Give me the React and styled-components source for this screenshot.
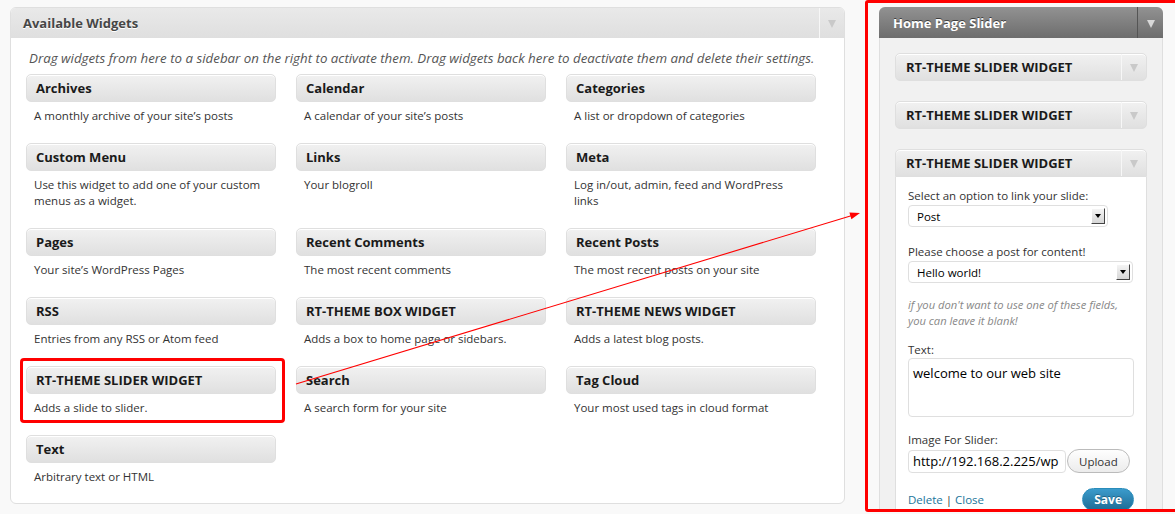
import React from 'react';
import styled, { createGlobalStyle } from 'styled-components';

const Global = createGlobalStyle`
  html, body { margin: 0; padding: 0; background: #f9f9f9; }
  body { font-family: "Open Sans", "DejaVu Sans", sans-serif; color: #333; }
  * { box-sizing: border-box; }
`;

const Page = styled.div`
  position: relative;
  display: flex;
  align-items: flex-start;
  gap: 20px;
  width: 1175px;
  height: 514px;
  padding-left: 10px;
  overflow: hidden;
`;

const Panel = styled.section`
  flex: none;
  margin-top: 7px;
  width: 835px;
  background: #fff;
  border: 1px solid #dfdfdf;
  border-radius: 6px;
`;

const Toggle = styled.div`
  flex: none;
  align-self: stretch;
  width: ${p => p.$w || 25}px;
  display: flex;
  align-items: center;
  justify-content: center;
  border-left: 1px solid ${p => p.$line || '#f7f7f7'};
  &::after {
    content: '';
    border-left: 4.5px solid transparent;
    border-right: 4.5px solid transparent;
    border-top: 8px solid ${p => p.$arrow || '#c9c9c9'};
    margin-top: 2px;
  }
`;

const PanelHeader = styled.div`
  display: flex;
  align-items: center;
  height: 30px;
  background: linear-gradient(#e9e9e9, #dfdfdf);
  border-radius: 5px 5px 0 0;
`;

const PanelTitle = styled.h3`
  flex: 1;
  margin: 0;
  padding-left: 12px;
  font-size: 13px;
  font-weight: 700;
  color: #464646;
  text-shadow: 0 1px 0 #fff;
`;

const Intro = styled.p`
  margin: 0;
  padding: 12px 0 0 18px;
  font-size: 13.3px;
  line-height: 16px;
  font-style: italic;
  color: #555;
  white-space: nowrap;
`;

const Grid = styled.div`
  display: grid;
  grid-template-columns: repeat(3, 250px);
  column-gap: 20px;
  row-gap: 19px;
  padding: 8px 15px 18px;
`;

const Widget = styled.div`
  position: relative;
  ${p => p.$marked && `
    &::after {
      content: '';
      position: absolute;
      top: -8px;
      left: -6px;
      right: -9px;
      bottom: -7px;
      border: 3px solid #f00;
      border-radius: 4px;
      pointer-events: none;
    }
  `}
`;

const Bar = styled.div`
  display: flex;
  align-items: center;
  height: 28px;
  background: linear-gradient(#f1f1f1, #e0e0e0);
  border: 1px solid #dfdfdf;
  border-radius: ${p => (p.$open ? '5px 5px 0 0' : '5px')};
  box-shadow: inset 0 1px 0 #fff;
`;

const BarTitle = styled.h4`
  flex: 1;
  margin: 0;
  padding-left: ${p => p.$pad || 9}px;
  font-size: 13px;
  font-weight: 700;
  color: #1a1a1a;
  white-space: nowrap;
`;

const Desc = styled.div`
  margin-top: 6px;
  padding: 0 8px;
  font-size: 11.5px;
  line-height: 16px;
  color: #333;
`;

const Annotated = styled.div`
  flex: none;
  width: 313px;
  height: 512px;
  border: 3px solid #f00;
  border-radius: 3px;
  overflow: hidden;
  padding: 4px 0 0 11px;
`;

const Sidebar = styled.section`
  width: 284px;
  border: 1px solid #dfdfdf;
  border-radius: 6px 6px 0 0;
  background: #f1f1f1;
`;

const SidebarHeader = styled.div`
  display: flex;
  align-items: center;
  height: 31px;
  margin: -1px -1px 0;
  background: linear-gradient(#929292, #6d6d6d);
  border-radius: 6px 6px 0 0;
`;

const SidebarTitle = styled.h3`
  flex: 1;
  margin: 0;
  padding-left: 14px;
  font-size: 13px;
  font-weight: 700;
  color: #fff;
  text-shadow: 0 -1px 0 #3f3f3f;
`;

const SidebarBody = styled.div`
  display: flex;
  flex-direction: column;
  gap: 20px;
  padding: 15px 15px 0;
`;

const WidgetBody = styled.div`
  background: #fff;
  border: 1px solid #dfdfdf;
  border-top: none;
  padding: 11px 12px 20px;
  display: flex;
  flex-direction: column;
`;

const Label = styled.label`
  display: block;
  font-size: 11.5px;
  line-height: 16px;
  color: #333;
  margin-top: ${p => p.$gap || 0}px;
`;

const Select = styled.div`
  display: flex;
  align-items: center;
  width: ${p => p.$w}px;
  height: 22px;
  margin-top: 1px;
  padding: 0 2px 0 8px;
  border: 1px solid #dfdfdf;
  border-radius: 4px;
  background: #fff;
  font-size: 11.5px;
  color: #000;
`;

const SelectValue = styled.span`
  flex: 1;
`;

const SelectButton = styled.span`
  width: 14px;
  height: 16px;
  display: flex;
  align-items: center;
  justify-content: center;
  background: linear-gradient(#f4f4f4, #d6d6d6);
  border-top: 1px solid #fff;
  border-left: 1px solid #fff;
  border-right: 1px solid #444;
  border-bottom: 1px solid #444;
  &::after {
    content: '';
    border-left: 3.5px solid transparent;
    border-right: 3.5px solid transparent;
    border-top: 4px solid #000;
  }
`;

const Note = styled.p`
  margin: 14px 0 0;
  font-size: 11.2px;
  line-height: 16px;
  font-style: italic;
  color: #888;
`;

const TextArea = styled.div`
  height: 59px;
  padding: 5px 4px;
  border: 1px solid #dfdfdf;
  border-radius: 4px;
  font-size: 13px;
  line-height: 18px;
  color: #000;
`;

const InputRow = styled.div`
  display: flex;
  align-items: center;
  gap: 1px;
  margin-top: 1px;
`;

const Input = styled.div`
  width: 158px;
  height: 23px;
  padding: 0 4px;
  display: flex;
  align-items: center;
  border: 1px solid #dfdfdf;
  border-radius: 4px;
  font-size: 13px;
  color: #000;
  overflow: hidden;
  white-space: nowrap;
`;

const Pill = styled.button`
  height: ${p => (p.$primary ? 23 : 24)}px;
  padding: 0 ${p => (p.$primary ? 11 : 11)}px;
  border-radius: 12px;
  font-family: inherit;
  font-size: ${p => (p.$primary ? 12 : 11.5)}px;
  font-weight: ${p => (p.$primary ? 700 : 400)};
  color: ${p => (p.$primary ? '#fff' : '#333')};
  border: 1px solid ${p => (p.$primary ? '#298cba' : '#bbb')};
  background: ${p => (p.$primary ? 'linear-gradient(#3b9bcc, #1e6c95)' : 'linear-gradient(#fefefe, #ececec)')};
  text-shadow: ${p => (p.$primary ? '0 -1px 0 rgba(0,0,0,0.3)' : 'none')};
`;

const Footer = styled.div`
  display: flex;
  align-items: center;
  justify-content: space-between;
  margin-top: 15px;
  padding-right: 0;
`;

const Links = styled.div`
  font-size: 11.5px;
  color: #333;
`;

const Link = styled.a`
  color: #21759b;
  text-decoration: none;
`;

const Overlay = styled.svg`
  position: absolute;
  left: 0;
  top: 0;
  pointer-events: none;
`;

const widgets = [
  ['Archives', 'A monthly archive of your site’s posts'],
  ['Calendar', 'A calendar of your site’s posts'],
  ['Categories', 'A list or dropdown of categories'],
  ['Custom Menu', 'Use this widget to add one of your custom menus as a widget.'],
  ['Links', 'Your blogroll'],
  ['Meta', 'Log in/out, admin, feed and WordPress links'],
  ['Pages', 'Your site’s WordPress Pages'],
  ['Recent Comments', 'The most recent comments'],
  ['Recent Posts', 'The most recent posts on your site'],
  ['RSS', 'Entries from any RSS or Atom feed'],
  ['RT-THEME BOX WIDGET', 'Adds a box to home page or sidebars.'],
  ['RT-THEME NEWS WIDGET', 'Adds a latest blog posts.'],
  ['RT-THEME SLIDER WIDGET', 'Adds a slide to slider.', true],
  ['Search', 'A search form for your site'],
  ['Tag Cloud', 'Your most used tags in cloud format'],
  ['Text', 'Arbitrary text or HTML'],
];

export default function App() {
  return (
    <>
      <Global />
      <Page>
        <Panel>
          <PanelHeader>
            <PanelTitle>Available Widgets</PanelTitle>
            <Toggle />
          </PanelHeader>
          <Intro>
            Drag widgets from here to a sidebar on the right to activate them. Drag widgets back here to deactivate them and delete their settings.
          </Intro>
          <Grid>
            {widgets.map(([t, d, m]) => (
              <Widget key={t} $marked={m}>
                <Bar>
                  <BarTitle>{t}</BarTitle>
                </Bar>
                <Desc>{d}</Desc>
              </Widget>
            ))}
          </Grid>
        </Panel>

        <Annotated>
          <Sidebar>
            <SidebarHeader>
              <SidebarTitle>Home Page Slider</SidebarTitle>
              <Toggle $w={26} $line="#555" $arrow="#d8d8d8" />
            </SidebarHeader>
            <SidebarBody>
              <Bar>
                <BarTitle $pad={10}>RT-THEME SLIDER WIDGET</BarTitle>
                <Toggle />
              </Bar>
              <Bar>
                <BarTitle $pad={10}>RT-THEME SLIDER WIDGET</BarTitle>
                <Toggle />
              </Bar>
              <div>
                <Bar $open>
                  <BarTitle $pad={10}>RT-THEME SLIDER WIDGET</BarTitle>
                  <Toggle />
                </Bar>
                <WidgetBody>
                  <Label>Select an option to link your slide:</Label>
                  <Select $w={200}>
                    <SelectValue>Post</SelectValue>
                    <SelectButton />
                  </Select>
                  <Label $gap={17}>Please choose a post for content!</Label>
                  <Select $w={225}>
                    <SelectValue>Hello world!</SelectValue>
                    <SelectButton />
                  </Select>
                  <Note>
                    if you don't want to use one of these fields,
                    <br />
                    you can leave it blank!
                  </Note>
                  <Label $gap={13}>Text:</Label>
                  <TextArea>welcome to our web site</TextArea>
                  <Label $gap={15}>Image For Slider:</Label>
                  <InputRow>
                    <Input>http://192.168.2.225/wp</Input>
                    <Pill type="button">Upload</Pill>
                  </InputRow>
                  <Footer>
                    <Links>
                      <Link href="#">Delete</Link> | <Link href="#">Close</Link>
                    </Links>
                    <Pill type="button" $primary>Save</Pill>
                  </Footer>
                </WidgetBody>
              </div>
            </SidebarBody>
          </Sidebar>
        </Annotated>

        <Overlay width="1175" height="514" viewBox="0 0 1175 514">
          <line x1="296" y1="384" x2="852" y2="215.5" stroke="#f00" strokeWidth="1.1" />
          <polygon points="860,213 851.4,219.3 849.4,212.5" fill="#f00" />
        </Overlay>
      </Page>
    </>
  );
}
